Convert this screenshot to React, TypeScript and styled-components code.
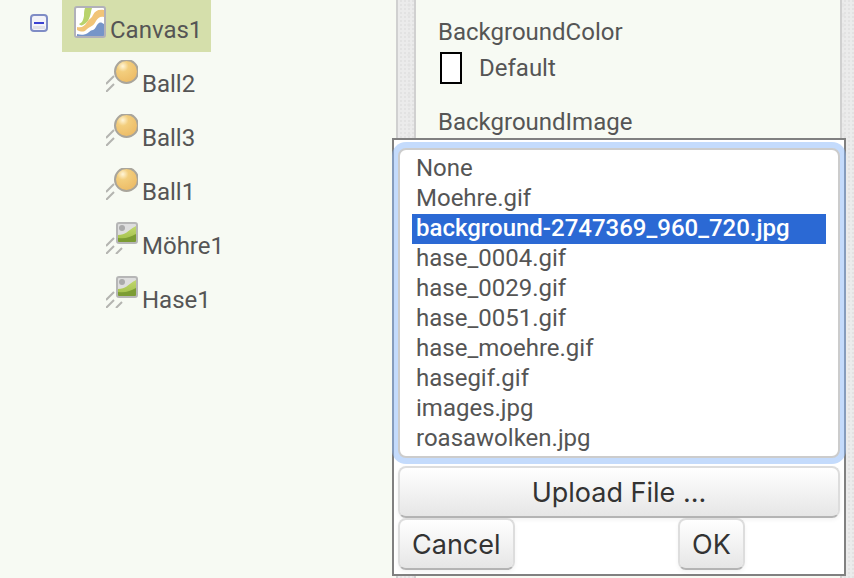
import React, { useState } from "react";
import styled, { createGlobalStyle } from "styled-components";

const GlobalStyle = createGlobalStyle`
  *, *::before, *::after { box-sizing: border-box; }
  body {
    margin: 0;
    background-color: #ebebeb;
    background-image:
      radial-gradient(circle at 1px 1px, #e2e2e2 1px, transparent 1px),
      radial-gradient(circle at 3px 5px, #e6e6e6 2px, transparent 2px);
    background-size: 4px 4px, 14px 10px;
    color: #555;
    font: 24px/30px Roboto, sans-serif;
  }
`;

const Page = styled.main`
  display: grid;
  grid-template-columns: minmax(0, 398fr) minmax(0, 428fr);
  column-gap: 16px;
  padding-right: 12px;
  min-height: 100vh;
`;

const Panel = styled.section`
  background: #f7faf3;
`;

const TreePanel = styled(Panel)`
  display: flex;
  align-items: flex-start;
  padding-left: 30px;
  border-right: 2px solid #d0d0d0;
`;

const PropertyPanel = styled(Panel)`
  position: relative;
  border: solid #d0d0d0;
  border-width: 0 2px;
  padding: 17px 22px;
`;

const Toggle = styled.button`
  display: flex;
  width: 18px;
  height: 18px;
  margin: 14px 14px 0 0;
  padding: 0;
  border: 0;
  background: none;
`;

const Tree = styled.ul`
  list-style: none;
  margin: 0;
  padding: 0;
`;

const Branch = styled(Tree)`
  padding-left: 32px;
`;

const TreeItem = styled.button<{ $selected?: boolean }>`
  display: flex;
  align-items: flex-start;
  gap: 4px;
  height: ${(p) => (p.$selected ? 52 : 54)}px;
  padding: ${(p) => (p.$selected ? 6 : 8)}px 9px 0 12px;
  border: 0;
  background: ${(p) => (p.$selected ? "#d5dfab" : "transparent")};
  color: inherit;
  font: inherit;
`;

const ItemName = styled.span`
  padding-top: 9px;
`;

const Heading = styled.h2`
  margin: 0;
  font: inherit;
`;

const ColorButton = styled.button`
  display: flex;
  align-items: center;
  gap: 17px;
  margin: 5px 0 23px;
  padding: 0 2px;
  border: 0;
  background: none;
  color: inherit;
  font: inherit;
`;

const Swatch = styled.span`
  width: 22px;
  height: 32px;
  border: 2px solid #000;
  background: #fff;
`;

const Popup = styled.div`
  position: absolute;
  top: 138px;
  left: -24px;
  right: -6px;
  padding: 8px 4px 4px;
  border: 2px solid #808080;
  background: #fff;
`;

const FileList = styled.select`
  display: block;
  width: 100%;
  height: 310px;
  margin-bottom: 8px;
  padding: 4px 12px 2px;
  border: 2px solid #ccc;
  border-radius: 8px;
  outline: 0;
  background: #fff;
  box-shadow: 0 0 0 6px rgba(137, 184, 250, 0.5);
  color: #555;
  font: 24px Roboto, sans-serif;
  overflow: hidden;
`;

const FileOption = styled.option`
  height: 30px;
  padding: 0 4px 2px;

  &:checked {
    background: #2b69d4 linear-gradient(#2b69d4, #2b69d4);
    color: #fff;
    font-weight: 500;
    -webkit-text-fill-color: #fff;
  }
`;

const Button = styled.button<{ $wide?: boolean }>`
  width: ${(p) => (p.$wide ? "100%" : "auto")};
  height: 52px;
  padding: 0 12px;
  border: 2px solid #ddd;
  border-bottom-color: #b4b4b4;
  border-radius: 8px;
  background: linear-gradient(#fff, #e6e6e6) padding-box;
  box-shadow: 0 2px 4px rgba(0, 0, 0, 0.05);
  color: #333;
  font: 27px Inter, sans-serif;
`;

const Actions = styled.div`
  display: grid;
  grid-template-columns: 280fr 162fr;
  justify-items: start;
`;

const Icon = styled.svg`
  flex: none;
  display: block;
`;

const MinusIcon = () => (
  <Icon width="18" height="18" viewBox="0 0 18 18">
    <rect x="1" y="1" width="16" height="16" rx="3" fill="#f3f3f8" stroke="#7f8cc5" strokeWidth="2" />
    <path d="M3 12h12v3H3z" fill="#dfe0e8" />
    <path d="M4 9h10" stroke="#3a41d2" strokeWidth="2" />
  </Icon>
);

const CanvasIcon = () => (
  <Icon width="32" height="32" viewBox="0 0 32 32">
    <rect x="1" y="1" width="30" height="30" rx="2" fill="#fff" />
    <path d="M11 2h7c-1 3-1 5-2 8-1 4-3 7-7 9-2 1-3 0-4-1 4-2 4-4 5-8 0-3 0-5 1-8Z" fill="#b9d36c" />
    <path d="M30 4v7c-4-1-6 1-8 4-3 6-6 5-10 9-2 2-5 2-9 0v-3c5 1 8-1 10-5 2-3 5-4 6-7 2-4 5-6 11-5Z" fill="#f1c477" />
    <path d="M30 18v12H3v-2c3 1 7 1 9 0 3-1 4-4 7-4 3-1 3-5 6-7 2-1 3 0 5 1Z" fill="#7695c8" />
    <rect x="1" y="1" width="30" height="30" rx="2" fill="none" stroke="#b1b1b9" strokeWidth="2" />
  </Icon>
);

const BallIcon = () => (
  <Icon width="32" height="32" viewBox="0 0 32 32">
    <defs>
      <radialGradient id="ball" cx="34%" cy="27%" r="70%">
        <stop offset="0" stopColor="#fff5d8" />
        <stop offset="0.35" stopColor="#f3ce7d" />
        <stop offset="1" stopColor="#edbd68" />
      </radialGradient>
    </defs>
    <circle cx="20.5" cy="11.5" r="11.5" fill="url(#ball)" stroke="#a9a59b" strokeWidth="2" />
    <path d="m0 24 8-8M0 32l8-8" stroke="#b4b4b0" strokeWidth="2" />
  </Icon>
);

const SpriteIcon = () => (
  <Icon width="32" height="32" viewBox="0 0 32 32">
    <defs>
      <linearGradient id="hill" x2="0" y2="1">
        <stop offset="0" stopColor="#c1d76f" />
        <stop offset="1" stopColor="#9fbe47" />
      </linearGradient>
    </defs>
    <rect x="11" y="1" width="20" height="20" rx="2" fill="#dedede" />
    <circle cx="16" cy="6" r="3" fill="#aaa" />
    <path d="M12 13c8 0 9-4 18-9v16H12Z" fill="url(#hill)" />
    <path d="M12 16c8 1 12-1 18-4v8H12Z" fill="#7c9c34" />
    <rect x="11" y="1" width="20" height="20" rx="2" fill="none" stroke="#b6b6b6" strokeWidth="2" />
    <path d="m0 24 8-8M0 32l8-8M10 32l6-6" stroke="#b4b4b0" strokeWidth="2" />
  </Icon>
);

const components = [
  { name: "Ball2", icon: BallIcon },
  { name: "Ball3", icon: BallIcon },
  { name: "Ball1", icon: BallIcon },
  { name: "Möhre1", icon: SpriteIcon },
  { name: "Hase1", icon: SpriteIcon },
];

const files = [
  "None",
  "Moehre.gif",
  "background-2747369_960_720.jpg",
  "hase_0004.gif",
  "hase_0029.gif",
  "hase_0051.gif",
  "hase_moehre.gif",
  "hasegif.gif",
  "images.jpg",
  "roasawolken.jpg",
];

export default function App() {
  const [file, setFile] = useState(files[2]);

  return (
    <>
      <GlobalStyle />
      <Page>
        <TreePanel>
          <Toggle aria-label="Collapse Canvas1" aria-expanded="true">
            <MinusIcon />
          </Toggle>
          <Tree>
            <li>
              <TreeItem $selected>
                <CanvasIcon />
                <ItemName>Canvas1</ItemName>
              </TreeItem>
              <Branch>
                {components.map(({ name, icon: ItemIcon }) => (
                  <li key={name}>
                    <TreeItem>
                      <ItemIcon />
                      <ItemName>{name}</ItemName>
                    </TreeItem>
                  </li>
                ))}
              </Branch>
            </li>
          </Tree>
        </TreePanel>
        <PropertyPanel>
          <Heading>BackgroundColor</Heading>
          <ColorButton>
            <Swatch />
            Default
          </ColorButton>
          <Heading id="image-label">BackgroundImage</Heading>
          <Popup>
            <FileList
              size={10}
              aria-labelledby="image-label"
              value={file}
              onChange={(e) => setFile(e.target.value)}
            >
              {files.map((name) => (
                <FileOption key={name}>{name}</FileOption>
              ))}
            </FileList>
            <Button $wide>Upload File ...</Button>
            <Actions>
              <Button>Cancel</Button>
              <Button>OK</Button>
            </Actions>
          </Popup>
        </PropertyPanel>
      </Page>
    </>
  );
}
